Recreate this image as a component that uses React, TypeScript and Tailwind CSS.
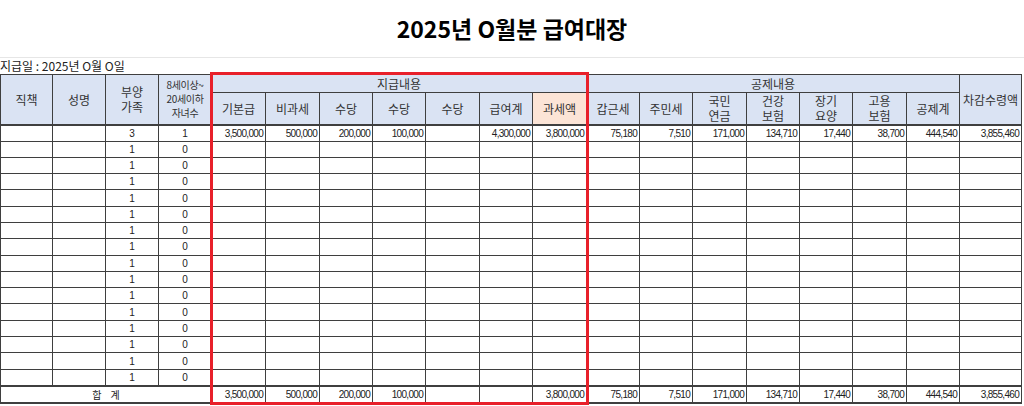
import React from "react";

const colWidths = [
  "w-[52px]", "w-[53px]", "w-[53px]", "w-[53px]",
  "w-[54px]", "w-[54px]", "w-[53px]", "w-[53px]", "w-[54px]", "w-[53px]", "w-[54px]",
  "w-[53px]", "w-[53px]", "w-[54px]", "w-[53px]", "w-[53px]", "w-[54px]", "w-[53px]",
  "w-[62px]",
];

const firstRow = [
  "3,500,000", "500,000", "200,000", "100,000", "", "4,300,000", "3,800,000",
  "75,180", "7,510", "171,000", "134,710", "17,440", "38,700", "444,540", "3,855,460",
];

const sumRow = [
  "3,500,000", "500,000", "200,000", "100,000", "", "", "3,800,000",
  "75,180", "7,510", "171,000", "134,710", "17,440", "38,700", "444,540", "3,855,460",
];

const cell = "border border-[#3f3f3f] p-0";
const headBase = `${cell} text-center align-middle font-normal text-[#333]`;
const head = `${headBase} bg-[#dae3f3] text-[12px] leading-[15px]`;
const peach = `${headBase} bg-[#fce4d6] text-[12px] leading-[15px]`;
const small = `${headBase} bg-[#dae3f3] text-[10px] leading-[14px] tracking-[-0.3px]`;
const num = `${cell} text-right pr-[2px] text-[10px] tracking-[-0.7px] text-[#222] font-['Liberation_Sans',sans-serif]`;
const mid = `${cell} text-center text-[10px] text-[#222] font-['Liberation_Sans',sans-serif]`;

const Lines = ({ a, b }: { a: string; b: string }) => (
  <>
    {a}
    <br />
    {b}
  </>
);

export default function App() {
  const rows = Array.from({ length: 16 }, (_, i) => i);

  return (
    <div className="relative w-[1024px] h-[406px] overflow-hidden bg-white font-['Noto_Sans_CJK_KR',sans-serif]">
      <div className="h-[58px] flex items-center justify-center border-b border-[#e6e6e6] text-[23px] font-bold text-black">
        2025년 O월분 급여대장
      </div>
      <div className="h-[16px] text-[12px] leading-[15px] text-[#222]">지급일 : 2025년 O월 O일</div>

      <table className="table-fixed border-collapse w-[1021px]">
        <colgroup>
          {colWidths.map((w, i) => (
            <col key={i} className={w} />
          ))}
        </colgroup>
        <thead>
          <tr className="h-[18px]">
            <th rowSpan={2} className={head}>직책</th>
            <th rowSpan={2} className={head}>성명</th>
            <th rowSpan={2} className={head}>
              <Lines a="부양" b="가족" />
            </th>
            <th rowSpan={2} className={small}>
              8세이상~
              <br />
              20세이하
              <br />
              자녀수
            </th>
            <th colSpan={7} className={head}>지급내용</th>
            <th colSpan={7} className={head}>공제내용</th>
            <th rowSpan={2} className={head}>차감수령액</th>
          </tr>
          <tr className="h-[32px] border-b-2 border-[#3f3f3f]">
            <th className={head}>기본급</th>
            <th className={head}>비과세</th>
            <th className={head}>수당</th>
            <th className={head}>수당</th>
            <th className={head}>수당</th>
            <th className={head}>급여계</th>
            <th className={peach}>과세액</th>
            <th className={head}>갑근세</th>
            <th className={head}>주민세</th>
            <th className={head}>
              <Lines a="국민" b="연금" />
            </th>
            <th className={head}>
              <Lines a="건강" b="보험" />
            </th>
            <th className={head}>
              <Lines a="장기" b="요양" />
            </th>
            <th className={head}>
              <Lines a="고용" b="보험" />
            </th>
            <th className={head}>공제계</th>
          </tr>
        </thead>
        <tbody>
          {rows.map((r) => (
            <tr key={r} className="h-[16.3px]">
              <td className={cell}></td>
              <td className={cell}></td>
              <td className={mid}>{r === 0 ? "3" : "1"}</td>
              <td className={mid}>{r === 0 ? "1" : "0"}</td>
              {firstRow.map((v, i) => (
                <td key={i} className={num}>
                  {r === 0 ? v : ""}
                </td>
              ))}
            </tr>
          ))}
          <tr className="h-[17px] border-t-2 border-b-2 border-[#3f3f3f]">
            <td colSpan={4} className={`${cell} text-center text-[10px] text-[#222]`}>
              합&nbsp;&nbsp;&nbsp;&nbsp;계
            </td>
            {sumRow.map((v, i) => (
              <td key={i} className={num}>
                {v}
              </td>
            ))}
          </tr>
        </tbody>
      </table>

      <div className="pointer-events-none absolute left-[210px] top-[72px] w-[379px] h-[333px] border-[3px] border-[#e8202a]" />
    </div>
  );
}
